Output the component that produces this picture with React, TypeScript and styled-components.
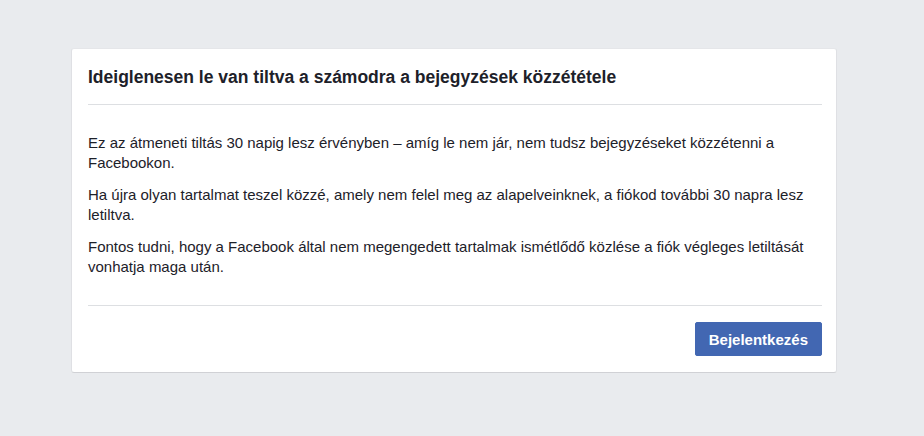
import React from "react";
import styled, { createGlobalStyle } from "styled-components";

const Global = createGlobalStyle`
  html, body { margin: 0; padding: 0; background: #e9ebee; }
  body { font-family: "Liberation Sans", Arial, Helvetica, sans-serif; color: #1d2129; }
`;

const Page = styled.div`
  padding: 48px 0 0 71px;
  min-height: 436px;
  box-sizing: border-box;
`;

const Card = styled.div`
  width: 766px;
  box-sizing: border-box;
  background: #fff;
  border: 1px solid;
  border-color: #e5e6e9 #dfe0e4 #d0d1d5;
  border-radius: 3px;
`;

const Header = styled.div`
  height: 55px;
  display: flex;
  align-items: center;
  margin: 0 14px 0 16px;
  border-bottom: 1px solid #dddfe2;
`;

const Title = styled.h2`
  margin: 0;
  font-size: 17.5px;
  font-weight: bold;
  line-height: 22px;
  color: #1d2129;
`;

const Body = styled.div`
  padding: 28px 0 28px;
  margin: 0 14px 0 16px;
  border-bottom: 1px solid #dddfe2;
`;

const Para = styled.p`
  margin: 0 0 12px;
  font-size: 15px;
  line-height: 20px;
  &:last-child { margin-bottom: 0; }
`;

const Footer = styled.div`
  display: flex;
  justify-content: flex-end;
  padding: 16px 14px 16px 16px;
`;

const Button = styled.button`
  height: 34px;
  padding: 0 13px;
  background: #4267b2;
  border: 1px solid #4267b2;
  border-radius: 2px;
  color: #fff;
  font-family: "Liberation Sans", Arial, Helvetica, sans-serif;
  font-size: 15px;
  font-weight: bold;
  cursor: pointer;
`;

export default function App() {
  return (
    <>
      <Global />
      <Page>
        <Card>
          <Header>
            <Title>Ideiglenesen le van tiltva a számodra a bejegyzések közzététele</Title>
          </Header>
          <Body>
            <Para>
              Ez az átmeneti tiltás 30 napig lesz érvényben – amíg le nem jár, nem tudsz bejegyzéseket közzétenni a Facebookon.
            </Para>
            <Para>
              Ha újra olyan tartalmat teszel közzé, amely nem felel meg az alapelveinknek, a fiókod további 30 napra lesz letiltva.
            </Para>
            <Para>
              Fontos tudni, hogy a Facebook által nem megengedett tartalmak ismétlődő közlése a fiók végleges letiltását vonhatja maga után.
            </Para>
          </Body>
          <Footer>
            <Button>Bejelentkezés</Button>
          </Footer>
        </Card>
      </Page>
    </>
  );
}
